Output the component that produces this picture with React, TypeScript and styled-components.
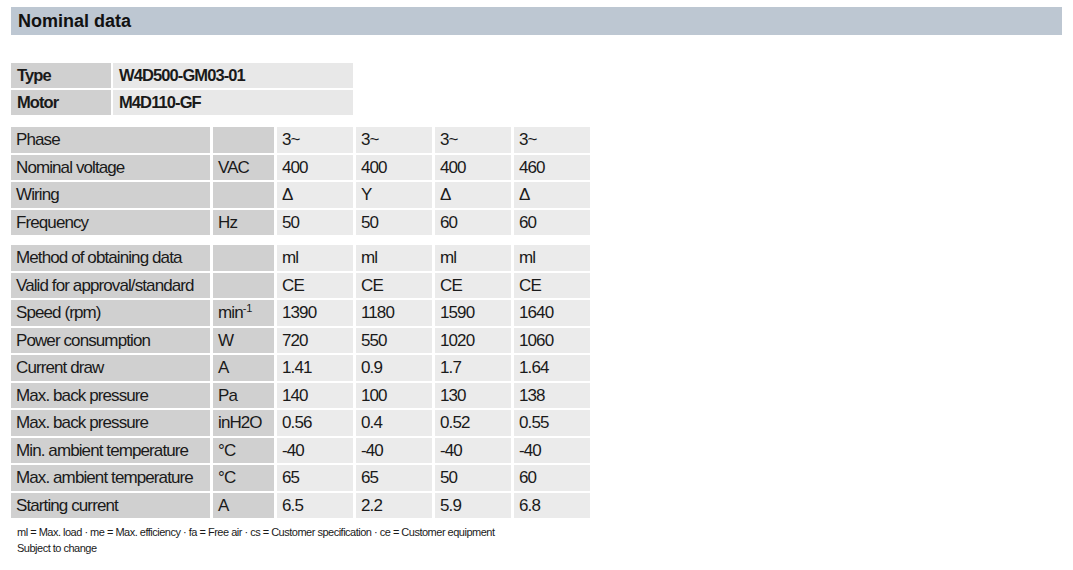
import React from "react";
import styled, { createGlobalStyle } from "styled-components";

const GlobalStyle = createGlobalStyle`
  body {
    margin: 0;
    background: #ffffff;
    font-family: "Liberation Sans", Arial, sans-serif;
    color: #1a1a1a;
  }
`;

type Row = { label: string; unit?: React.ReactNode; values: string[] };

const groupOne: Row[] = [
  { label: "Phase", values: ["3~", "3~", "3~", "3~"] },
  { label: "Nominal voltage", unit: "VAC", values: ["400", "400", "400", "460"] },
  { label: "Wiring", values: ["Δ", "Y", "Δ", "Δ"] },
  { label: "Frequency", unit: "Hz", values: ["50", "50", "60", "60"] },
];

const groupTwo: Row[] = [
  { label: "Method of obtaining data", values: ["ml", "ml", "ml", "ml"] },
  { label: "Valid for approval/standard", values: ["CE", "CE", "CE", "CE"] },
  {
    label: "Speed (rpm)",
    unit: (
      <>
        min<sup>-1</sup>
      </>
    ),
    values: ["1390", "1180", "1590", "1640"],
  },
  { label: "Power consumption", unit: "W", values: ["720", "550", "1020", "1060"] },
  { label: "Current draw", unit: "A", values: ["1.41", "0.9", "1.7", "1.64"] },
  { label: "Max. back pressure", unit: "Pa", values: ["140", "100", "130", "138"] },
  { label: "Max. back pressure", unit: "inH2O", values: ["0.56", "0.4", "0.52", "0.55"] },
  { label: "Min. ambient temperature", unit: "°C", values: ["-40", "-40", "-40", "-40"] },
  { label: "Max. ambient temperature", unit: "°C", values: ["65", "65", "50", "60"] },
  { label: "Starting current", unit: "A", values: ["6.5", "2.2", "5.9", "6.8"] },
];

const App = () => {
  return (
    <Page>
      <GlobalStyle />
      <TitleBar>Nominal data</TitleBar>

      <IdTable>
        <IdCell $head>Type</IdCell>
        <IdCell>W4D500-GM03-01</IdCell>
        <IdCell $head>Motor</IdCell>
        <IdCell>M4D110-GF</IdCell>
      </IdTable>

      {[groupOne, groupTwo].map((group, gi) => (
        <DataTable key={gi}>
          {group.map((row, ri) => (
            <React.Fragment key={ri}>
              <Cell $dark>{row.label}</Cell>
              <Cell $dark>{row.unit}</Cell>
              {row.values.map((v, vi) => (
                <Cell key={vi}>{v}</Cell>
              ))}
            </React.Fragment>
          ))}
        </DataTable>
      ))}

      <Footer>
        <div>
          ml = Max. load · me = Max. efficiency · fa = Free air · cs = Customer specification · ce =
          Customer equipment
        </div>
        <div>Subject to change</div>
      </Footer>
    </Page>
  );
};

const Page = styled.div`
  padding: 7px 11px 0 11px;
  width: 1051px;
`;

const TitleBar = styled.div`
  height: 28px;
  line-height: 28px;
  background: #bdc7d2;
  padding-left: 7px;
  font-size: 18px;
  font-weight: bold;
  color: #111;
`;

const IdTable = styled.div`
  display: grid;
  grid-template-columns: 100px 240px;
  grid-auto-rows: 25px;
  gap: 2px;
  margin-top: 28px;
`;

const IdCell = styled.div<{ $head?: boolean }>`
  background: ${(p) => (p.$head ? "#d0d0d0" : "#e8e8e8")};
  font-weight: bold;
  font-size: 16.5px;
  letter-spacing: -0.9px;
  line-height: 25px;
  padding-left: 6px;
  white-space: nowrap;
`;

const DataTable = styled.div`
  display: grid;
  grid-template-columns: 199px 61px 76px 76px 76px 76px;
  grid-auto-rows: 25.5px;
  column-gap: 3px;
  row-gap: 2px;
  margin-top: 12px;
  & + & {
    margin-top: 10px;
  }
`;

const Cell = styled.div<{ $dark?: boolean }>`
  background: ${(p) => (p.$dark ? "#d0d0d0" : "#ebebeb")};
  font-size: 17px;
  letter-spacing: -0.9px;
  line-height: 25.5px;
  padding-left: 5px;
  white-space: nowrap;
  sup {
    font-size: 11px;
    vertical-align: 6px;
    line-height: 0;
    letter-spacing: 0;
  }
`;

const Footer = styled.div`
  margin-top: 6px;
  padding-left: 6px;
  font-size: 11px;
  line-height: 16px;
  letter-spacing: -0.5px;
  color: #1a1a1a;
`;

export default App;
